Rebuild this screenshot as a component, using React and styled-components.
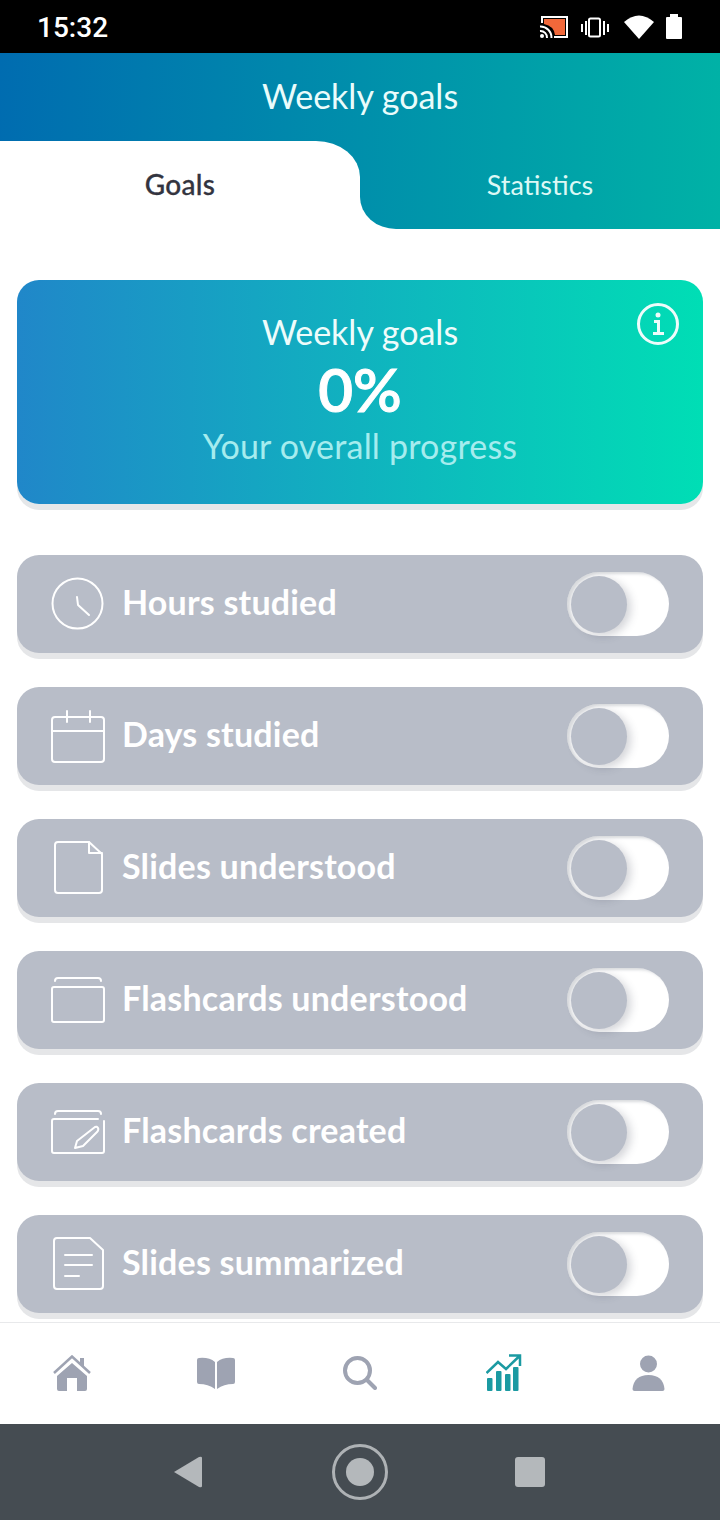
import React from "react";
import styled, { createGlobalStyle, css } from "styled-components";

const Global = createGlobalStyle`
  html, body { margin: 0; padding: 0; background: #fff; }
  * { box-sizing: border-box; }
  body { font-family: "Lato", "Open Sans", sans-serif; }
`;

const headerGradient = css`
  background-image: linear-gradient(92deg, #006cb0 0%, #00b2a6 100%);
  background-size: 720px 176px;
  background-repeat: no-repeat;
`;

const Page = styled.div`
  width: 720px;
  height: 1520px;
  display: flex;
  flex-direction: column;
  overflow: hidden;
`;

const StatusBar = styled.div`
  height: 53px;
  background: #000;
  display: flex;
  align-items: center;
  justify-content: space-between;
  padding: 0 36px 0 37px;
  flex: none;
`;

const Clock = styled.span`
  color: #fff;
  font: 500 28px/1 "Roboto", sans-serif;
  margin-top: 3px;
`;

const StatusIcons = styled.svg`
  display: block;
`;

const Header = styled.header`
  height: 176px;
  flex: none;
  display: flex;
  flex-direction: column;
  ${headerGradient}
`;

const HeaderTitle = styled.h1`
  margin: 0;
  height: 88px;
  display: flex;
  align-items: center;
  justify-content: center;
  color: #eafcfb;
  font-size: 34px;
  font-weight: 400;
  padding-bottom: 4px;
`;

const Tabs = styled.div`
  height: 88px;
  display: grid;
  grid-template-columns: 360px 360px;
`;

const TabCell = styled.div`
  ${(p) =>
    p.$active
      ? css`
          ${headerGradient}
          background-position: 0 -88px;
        `
      : css`
          background: #fff;
        `}
`;

const Tab = styled.div`
  height: 100%;
  display: flex;
  align-items: center;
  justify-content: center;
  padding-bottom: 2px;
  ${(p) =>
    p.$active
      ? css`
          background: #fff;
          color: #33343f;
          font-size: 28px;
          font-weight: 500;
          letter-spacing: 0.3px;
          -webkit-text-stroke: 0.3px #33343f;
          border-top-right-radius: 44px 36px;
        `
      : css`
          ${headerGradient}
          background-position: -360px -88px;
          color: #dcf8f5;
          font-size: 27px;
          font-weight: 400;
          border-bottom-left-radius: 36px 32px;
        `}
`;

const Content = styled.main`
  flex: 1;
  padding: 51px 17px 0;
  display: flex;
  flex-direction: column;
`;

const SummaryCard = styled.section`
  position: relative;
  height: 224px;
  margin-bottom: 51px;
  flex: none;
  border-radius: 22px;
  background: linear-gradient(90deg, #2087c9 0%, #00deb5 100%);
  box-shadow: 0 6px 0 #e5e7e9;
  display: flex;
  flex-direction: column;
  align-items: center;
  padding-top: 32px;
  text-align: center;
`;

const CardTitle = styled.div`
  color: #eefcfb;
  font-size: 34px;
  line-height: 40px;
`;

const CardValue = styled.div`
  color: #fff;
  font-size: 60px;
  font-weight: 600;
  -webkit-text-stroke: 1px #fff;
  line-height: 72px;
  margin-top: 1px;
`;

const CardSub = styled.div`
  color: #a5ecee;
  font-size: 34px;
  letter-spacing: 0.2px;
  line-height: 40px;
  margin-top: 1px;
`;

const InfoIcon = styled.svg`
  position: absolute;
  top: 22px;
  right: 23px;
`;

const GoalList = styled.div`
  display: flex;
  flex-direction: column;
  gap: 34px;
`;

const GoalRow = styled.div`
  height: 98px;
  border-radius: 22px;
  background: #b8bdc8;
  box-shadow: 0 6px 0 #e5e6e8;
  display: flex;
  align-items: center;
  padding: 0 34px;
`;

const GoalIcon = styled.svg`
  flex: none;
  display: block;
  margin-right: 17px;
  fill: none;
  stroke: #fff;
  stroke-width: 2;
  stroke-linecap: round;
  stroke-linejoin: round;
`;

const GoalLabel = styled.span`
  flex: 1;
  color: #fff;
  font-size: 34px;
  font-weight: 700;
  letter-spacing: 0.2px;
  margin-top: -5px;
`;

const Toggle = styled.div`
  width: 102px;
  height: 64px;
  border-radius: 32px;
  background: #fff;
  box-shadow: inset 3px 2px 3px rgba(120, 125, 135, 0.28);
  display: flex;
  align-items: center;
  padding: 0 0 0 4px;
`;

const Knob = styled.div`
  width: 56px;
  height: 57px;
  border-radius: 50%;
  background: #b8bdc8;
  box-shadow: 4px 3px 9px rgba(60, 65, 80, 0.22);
`;

const BottomNav = styled.nav`
  height: 102px;
  flex: none;
  border-top: 1px solid #e8e9eb;
  background: #fff;
  padding-bottom: 2px;
  display: grid;
  grid-template-columns: repeat(5, 1fr);
  align-items: center;
  justify-items: center;
`;

const NavIcon = styled.svg`
  display: block;
  fill: ${(p) => (p.$active ? "#1b9aa2" : "#9ea3b2")};
  stroke: ${(p) => (p.$active ? "#1b9aa2" : "#9ea3b2")};
  stroke-width: 0;
`;

const SystemBar = styled.div`
  height: 96px;
  flex: none;
  background: #454c52;
  display: flex;
  align-items: center;
  justify-content: center;
  gap: 128px;
  padding-right: 1px;
`;

const BackIcon = styled.svg`
  display: block;
`;

const HomeRing = styled.div`
  width: 56px;
  height: 56px;
  border-radius: 50%;
  border: 3px solid #aeb2b5;
  display: flex;
  align-items: center;
  justify-content: center;
`;

const HomeDot = styled.div`
  width: 28px;
  height: 28px;
  border-radius: 50%;
  background: #b4b8bb;
`;

const RecentSquare = styled.div`
  width: 30px;
  height: 30px;
  margin-left: -1px;
  border-radius: 3px;
  background: #b4b8bb;
`;

const icon = (children) => (
  <GoalIcon width="54" height="54" viewBox="0 0 54 54">
    {children}
  </GoalIcon>
);

const goals = [
  {
    label: "Hours studied",
    icon: icon(
      <>
        <circle cx="26.5" cy="26.5" r="25" />
        <path d="M26 20 L27 28 L38 38" />
      </>
    ),
  },
  {
    label: "Days studied",
    icon: icon(
      <>
        <rect x="1" y="8" width="52" height="45" rx="3" />
        <path d="M1 22 H53 M16 2 V13 M39 2 V13" />
      </>
    ),
  },
  {
    label: "Slides understood",
    icon: icon(
      <>
        <path d="M7 1 H38 L51 13 V49 Q51 52 48 52 H7 Q4 52 4 49 V4 Q4 1 7 1 Z" />
        <path d="M38 1 V12 H51" />
      </>
    ),
  },
  {
    label: "Flashcards understood",
    icon: icon(
      <>
        <rect x="1" y="14" width="52" height="35" rx="2" />
        <path d="M4 8 Q4 5 7 5 H47 Q50 5 50 8" />
      </>
    ),
  },
  {
    label: "Flashcards created",
    icon: icon(
      <>
        <path d="M47 14 H3 Q1 14 1 16 V46 Q1 48 3 48 H51 Q53 48 53 46 V16" />
        <path d="M4 9 Q4 6 7 6 H47 Q50 6 50 9" />
        <path d="M24 43 L26 36 L44 22 Q46 21 47 23 Q48 25 46 27 L32 41 Z" />
      </>
    ),
  },
  {
    label: "Slides summarized",
    icon: icon(
      <>
        <path d="M6 1 H39 L52 13 V49 Q52 52 49 52 H6 Q3 52 3 49 V4 Q3 1 6 1 Z" />
        <path d="M14 18 H41 M14 28 H41 M14 39 H28" />
      </>
    ),
  },
];

export default function App() {
  return (
    <Page>
      <Global />
      <StatusBar>
        <Clock>15:32</Clock>
        <StatusIcons width="146" height="30" viewBox="540 11 146 30">
          <path d="M544 22 V16 H569 V36 H556" fill="none" stroke="#fff" strokeWidth="2" />
          <path d="M546 18 H567 V34 H557 Q556 25 546 23 Z" fill="#f1683a" />
          <circle cx="544" cy="35" r="2" fill="#fff" />
          <path d="M542 30 A6.5 6.5 0 0 1 549 37 M542 25.500 A11 11 0 0 1 553.500 37" fill="none" stroke="#fff" strokeWidth="2" />
          <rect x="591" y="17.500" width="11" height="18" rx="1.500" fill="none" stroke="#fff" strokeWidth="2" />
          <rect x="583" y="23" width="2" height="8" fill="#fff" />
          <rect x="587" y="20" width="2" height="14" fill="#fff" />
          <rect x="605" y="20" width="2" height="14" fill="#fff" />
          <rect x="609" y="23" width="2" height="8" fill="#fff" />
          <path d="M626 21 Q641 8 656 21 L641 38 Z" fill="#fff" />
          <path d="M672 13 H680 V16 H683 Q684 16 684 17 V37 Q684 38 683 38 H669 Q668 38 668 37 V17 Q668 16 669 16 H672 Z" fill="#fff" />
        </StatusIcons>
      </StatusBar>

      <Header>
        <HeaderTitle>Weekly goals</HeaderTitle>
        <Tabs>
          <TabCell $active>
            <Tab $active>Goals</Tab>
          </TabCell>
          <TabCell>
            <Tab>Statistics</Tab>
          </TabCell>
        </Tabs>
      </Header>

      <Content>
        <SummaryCard>
          <CardTitle>Weekly goals</CardTitle>
          <CardValue>0%</CardValue>
          <CardSub>Your overall progress</CardSub>
          <InfoIcon width="44" height="44" viewBox="0 0 44 44" fill="none" stroke="#eefcfb">
            <circle cx="22" cy="22" r="19.500" strokeWidth="3" />
            <circle cx="22" cy="13" r="2.500" fill="#eefcfb" stroke="none" />
            <path d="M18 19.500 H22.500 V31 M17 31.500 H28" strokeWidth="3" />
          </InfoIcon>
        </SummaryCard>

        <GoalList>
          {goals.map((g) => (
            <GoalRow key={g.label}>
              {g.icon}
              <GoalLabel>{g.label}</GoalLabel>
              <Toggle>
                <Knob />
              </Toggle>
            </GoalRow>
          ))}
        </GoalList>
      </Content>

      <BottomNav>
        <NavIcon width="38" height="36" viewBox="0 0 38 36">
          <path d="M1 18 L19 1.500 L37 18" fill="none" strokeWidth="2.500" />
          <path d="M27 3 H31 V12 L27 8 Z" />
          <path d="M19 8 L34 21 V34 Q34 36 32 36 H24 V23 H14 V36 H6 Q4 36 4 34 V21 Z" />
        </NavIcon>
        <NavIcon width="38" height="34" viewBox="0 0 38 34">
          <path d="M0 4 Q0 2 2 2 Q12 1 18 6 V33 Q11 28 2 28 Q0 28 0 26 Z" />
          <path d="M38 4 Q38 2 36 2 Q26 1 20 6 V33 Q27 28 36 28 Q38 28 38 26 Z" />
        </NavIcon>
        <NavIcon width="34" height="34" viewBox="0 0 34 34">
          <circle cx="14.500" cy="14.500" r="12.500" fill="none" strokeWidth="4" />
          <path d="M24 24 L32 32" fill="none" strokeWidth="4" strokeLinecap="round" />
        </NavIcon>
        <NavIcon $active width="36" height="38" viewBox="487 1353 36 38">
          <rect x="488" y="1377" width="5.500" height="13" rx="1" />
          <rect x="497" y="1370" width="5.500" height="20" rx="1" />
          <rect x="506" y="1373" width="5.500" height="17" rx="1" />
          <rect x="514" y="1366" width="5.500" height="24" rx="1" />
          <path d="M487.500 1372 L499 1361 L507 1368 L520.500 1355 M510 1354.500 H521 V1365" fill="none" strokeWidth="2.500" />
        </NavIcon>
        <NavIcon width="33" height="36" viewBox="0 0 33 36">
          <circle cx="16.500" cy="9" r="8.500" />
          <path d="M0.500 34 Q2 20 16.500 20 Q31 20 32.500 34 Q32.500 36 30.500 36 H2.500 Q0.500 36 0.500 34 Z" />
        </NavIcon>
      </BottomNav>

      <SystemBar>
        <BackIcon width="30" height="34" viewBox="0 0 30 34">
          <path d="M0 17 L25 2 Q28 1 28 3 V31 Q28 33 25 32 Z" fill="#b4b8bb" />
        </BackIcon>
        <HomeRing>
          <HomeDot />
        </HomeRing>
        <RecentSquare />
      </SystemBar>
    </Page>
  );
}
